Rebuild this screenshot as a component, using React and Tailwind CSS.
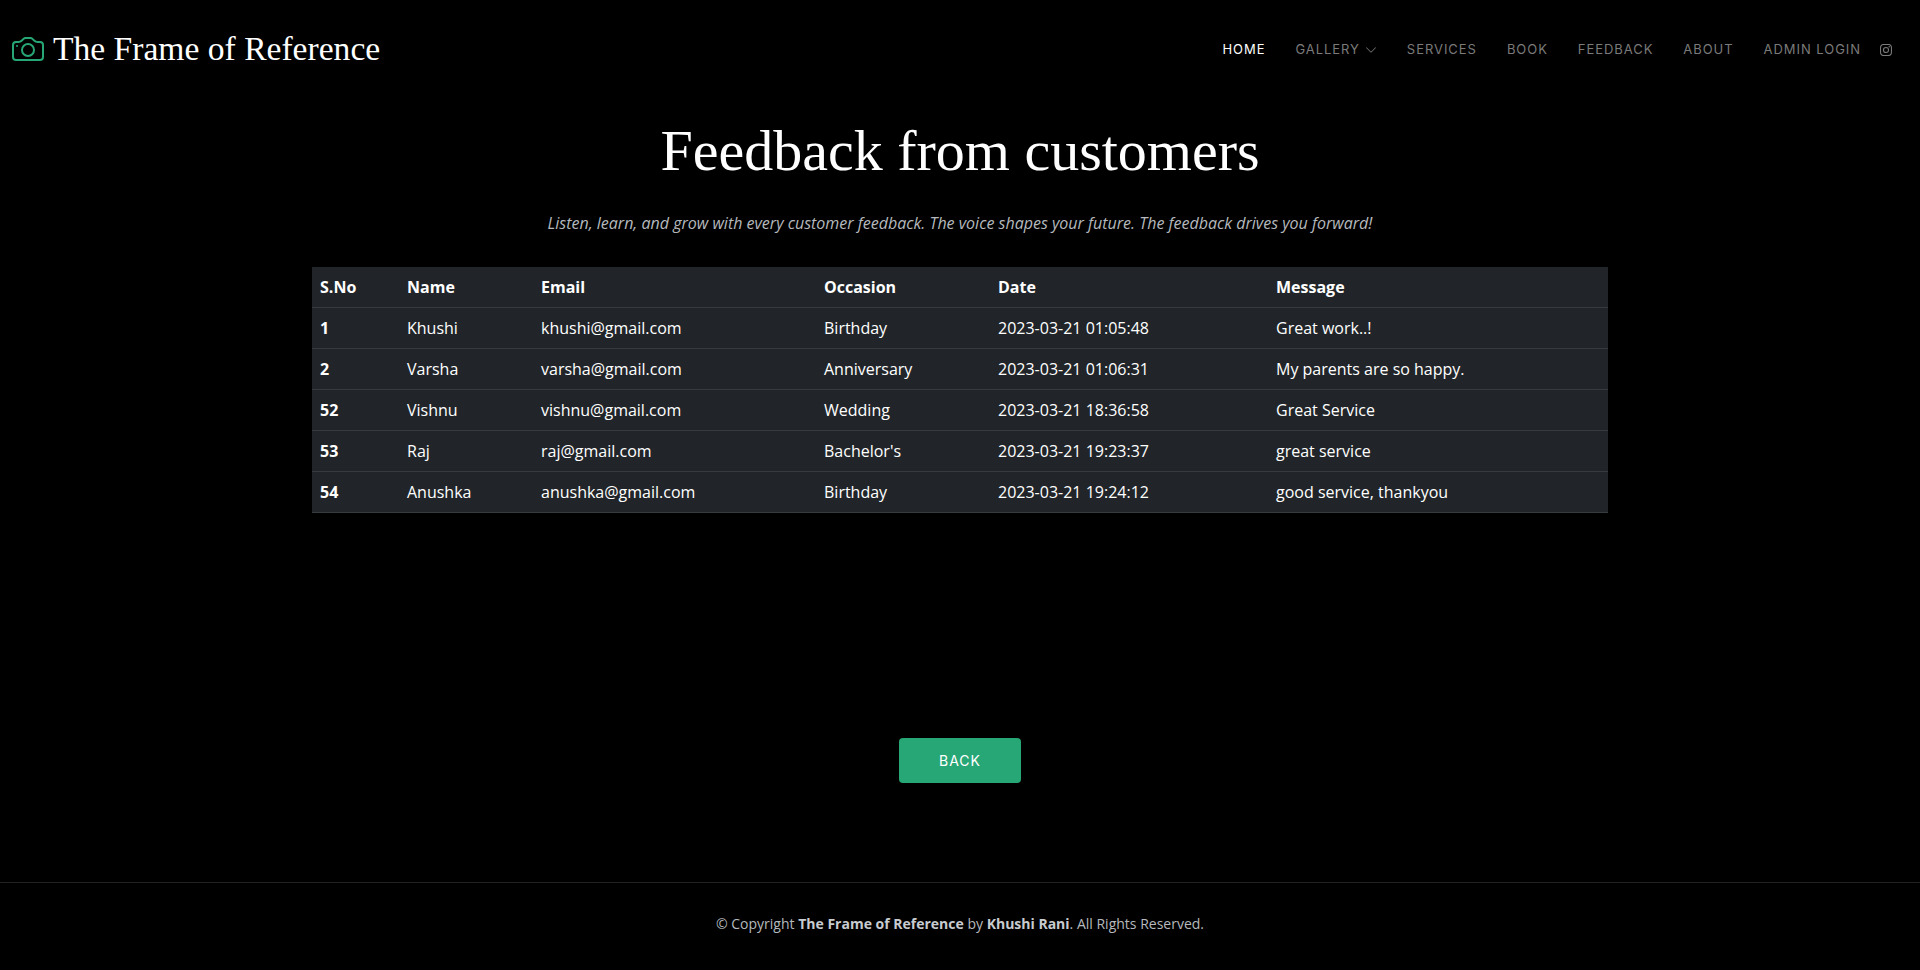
import { BsCamera, BsChevronDown, BsInstagram } from "react-icons/bs";

const rows = [
  ["1", "Khushi", "khushi@gmail.com", "Birthday", "2023-03-21 01:05:48", "Great work..!"],
  ["2", "Varsha", "varsha@gmail.com", "Anniversary", "2023-03-21 01:06:31", "My parents are so happy."],
  ["52", "Vishnu", "vishnu@gmail.com", "Wedding", "2023-03-21 18:36:58", "Great Service"],
  ["53", "Raj", "raj@gmail.com", "Bachelor's", "2023-03-21 19:23:37", "great service"],
  ["54", "Anushka", "anushka@gmail.com", "Birthday", "2023-03-21 19:24:12", "good service, thankyou"],
];

const navLinks = ["SERVICES", "BOOK", "FEEDBACK", "ABOUT", "ADMIN LOGIN"];

const App = () => {
  return (
    <div className="min-h-[970px] bg-black text-white font-['Open_Sans',sans-serif] flex flex-col">
      {/* Header */}
      <header className="h-[98px] pl-3 pr-[28px] flex items-center justify-between">
        <div className="flex items-center gap-[9px]">
          <BsCamera className="w-8 h-8 text-[#27a776]" />
          <span className="font-['Liberation_Serif',serif] text-[33.6px] leading-none">The Frame of Reference</span>
        </div>
        <nav className="pt-0.5 flex items-center font-['Inter',sans-serif] text-[13px] tracking-[0.95px] text-[#7a7a7a]">
          <a className="text-white">HOME</a>
          <a className="ml-[30px] flex items-center gap-[5px]">
            GALLERY <BsChevronDown className="w-3 h-3" />
          </a>
          {navLinks.map((link) => (
            <a key={link} className="ml-[30px]">{link}</a>
          ))}
          <BsInstagram className="ml-[19px] w-3 h-3" />
        </nav>
      </header>

      {/* Title */}
      <section className="flex flex-col items-center">
        <h1 className="mt-[17px] font-['Liberation_Serif',serif] text-[58px] leading-[72px]">Feedback from customers</h1>
        <p className="mt-[24px] italic text-[#b5b9bd] text-base leading-6">
          Listen, learn, and grow with every customer feedback. The voice shapes your future. The feedback drives you forward!
        </p>
      </section>

      {/* Feedback table */}
      <div className="w-[1296px] mx-auto mt-[32px]">
        <table className="w-full table-fixed border-collapse bg-[#212529] text-base">
          <thead>
            <tr className="border-b border-[#373b3e] h-[40px] text-left">
              <th className="w-[87px] px-2 font-bold">S.No</th>
              <th className="w-[134px] px-2 font-bold">Name</th>
              <th className="w-[283px] px-2 font-bold">Email</th>
              <th className="w-[174px] px-2 font-bold">Occasion</th>
              <th className="w-[278px] px-2 font-bold">Date</th>
              <th className="px-2 font-bold">Message</th>
            </tr>
          </thead>
          <tbody>
            {rows.map((row) => (
              <tr key={row[0]} className="border-b border-[#373b3e] h-[41px]">
                <td className="px-2 font-bold">{row[0]}</td>
                <td className="px-2">{row[1]}</td>
                <td className="px-2">{row[2]}</td>
                <td className="px-2">{row[3]}</td>
                <td className="px-2">{row[4]}</td>
                <td className="px-2">{row[5]}</td>
              </tr>
            ))}
          </tbody>
        </table>
      </div>

      <div className="flex justify-center mt-[225px]">
        <button className="w-[122px] h-[45px] pt-0.5 rounded-[4px] bg-[#27a776] font-['Inter',sans-serif] text-sm tracking-[1px] text-white">
          BACK
        </button>
      </div>

      {/* Footer */}
      <footer className="mt-[99px] h-[88px] pb-1 border-t border-[#222222] flex items-center justify-center text-sm text-[#b5b9bd]">
        <p>
          © Copyright <strong className="font-bold text-[#c8ccd0]">The Frame of Reference</strong> by{" "}
          <strong className="font-bold text-[#c8ccd0]">Khushi Rani</strong>. All Rights Reserved.
        </p>
      </footer>
    </div>
  );
};

export default App;
